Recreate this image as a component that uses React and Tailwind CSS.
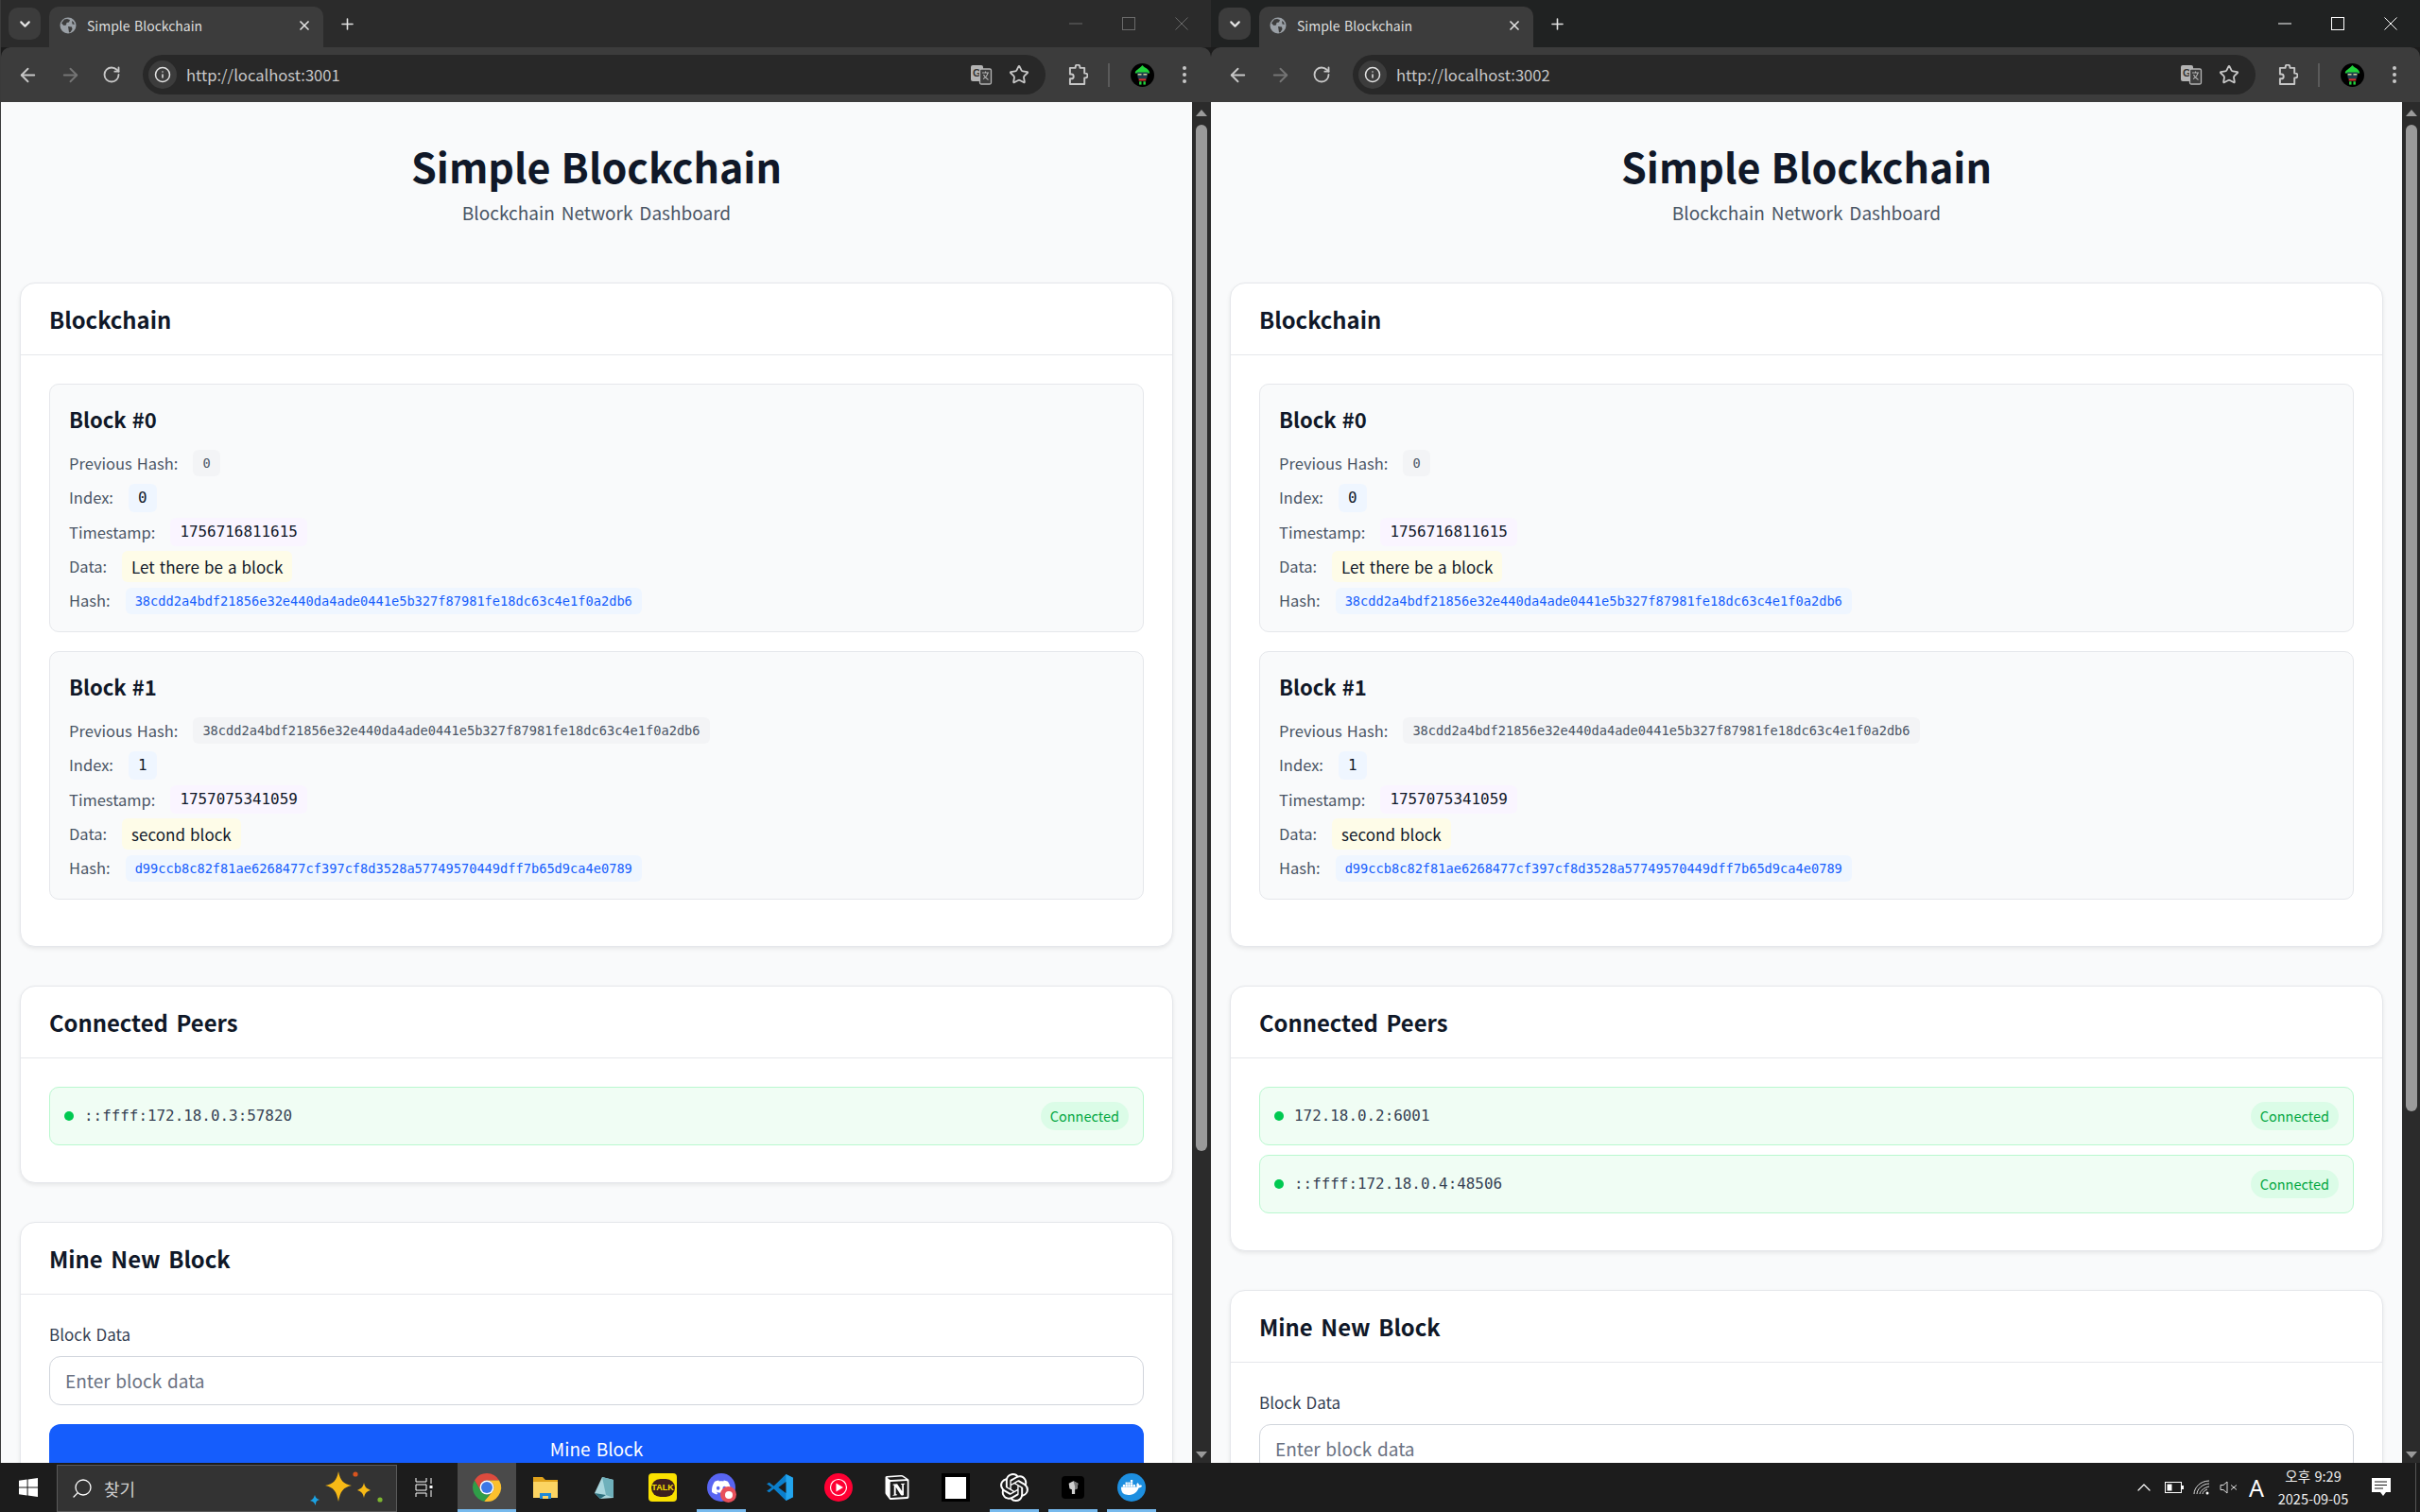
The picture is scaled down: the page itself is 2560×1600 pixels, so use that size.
import { ArrowLeft, ArrowRight, ChevronDown, Info, Plus, RotateCw, Star, X, Search, ChevronUp } from "lucide-react";
import { SiOpenai, SiNotion, SiDocker, SiDiscord } from "react-icons/si";

const UI_FONT = "font-['Noto_Sans_CJK_KR','Noto_Sans',sans-serif] [word-spacing:0.08em]";
const MONO = "font-['DejaVu_Sans_Mono',monospace] [word-spacing:0]";

const HASH_0 = "38cdd2a4bdf21856e32e440da4ade0441e5b327f87981fe18dc63c4e1f0a2db6";
const HASH_1 = "d99ccb8c82f81ae6268477cf397cf8d3528a57749570449dff7b65d9ca4e0789";

const blocks = [
  { id: 0, prev: "0", ts: "1756716811615", data: "Let there be a block", hash: HASH_0 },
  { id: 1, prev: HASH_0, ts: "1757075341059", data: "second block", hash: HASH_1 },
];

const Globe = () => (
  <svg viewBox="0 0 18 18" className="w-[18px] h-[18px] shrink-0">
    <circle cx="9" cy="9" r="8.5" fill="#9aa0a6" />
    <path d="M5 2.5 8 2l3 1-1 2.5L7.5 6 7 8.5 4.5 9 2 6.5zM9 10l4 .5.5 2.5-2 3-1.5.5-.5-3.5zM13 4l2 1.5.8 2.5-2.3-.5z" fill="#3c3c3c" />
  </svg>
);

const Translate = () => (
  <svg viewBox="0 0 24 24" className="w-[24px] h-[24px]">
    <rect x="1" y="2" width="13" height="17" rx="2" fill="#b4b4b4" />
    <text x="3" y="14" fontSize="11" fontWeight="700" fill="#333" fontFamily="Liberation Sans">G</text>
    <rect x="10.5" y="6" width="12" height="16" rx="1.5" fill="#3c3c3c" stroke="#b4b4b4" strokeWidth="1.3" />
    <path d="M13 10h7M16.5 8.5V10M19 10c-.6 3-2.4 5-5 6.5M14.5 12c.8 2 2.8 4 5 5.5" stroke="#b4b4b4" strokeWidth="1.1" fill="none" />
  </svg>
);

const ChromePuzzle = () => (
  <svg viewBox="0 0 22 24" className="ml-[24px] w-[21px] h-[23px]" fill="none" stroke="#c7c7c7" strokeWidth="2" strokeLinejoin="round">
    <path d="M2 4h6V3a2.5 2.5 0 0 1 5 0v1h5v6h1a2.5 2.5 0 0 1 0 5h-1v7H2v-6h1.5a2.5 2.5 0 0 0 0-5H2z" />
  </svg>
);

const Avatar = () => (
  <svg viewBox="0 0 26 26" className="w-[25px] h-[25px]">
    <circle cx="13" cy="13" r="13" fill="#000" />
    <path d="M5 11c0-4 4-4 8-9 2 3 8 4 8 9z" fill="#22d33c" />
    <path d="M7 10h12l-1 6-2.5 3h-5L8 16z" fill="#1f3b4d" />
    <rect x="8" y="11.5" width="4" height="1.5" fill="#d8d69a" />
    <rect x="14" y="11.5" width="4" height="1.5" fill="#d8d69a" />
    <rect x="9" y="17" width="8" height="2.2" fill="#d9302c" />
    <rect x="9.5" y="20" width="2.5" height="3.5" fill="#22d33c" />
    <rect x="14" y="20" width="2.5" height="3.5" fill="#22d33c" />
  </svg>
);

const Kebab = () => (
  <svg viewBox="0 0 6 20" className="w-[6px] h-[20px]" fill="#c7c7c7">
    <circle cx="3" cy="3" r="2" />
    <circle cx="3" cy="10" r="2" />
    <circle cx="3" cy="17" r="2" />
  </svg>
);

const WindowControls = ({ active }) => {
  const stroke = active ? "#ffffff" : "#6a6a6a";
  return (
    <div className="ml-auto flex items-center h-[50px] pr-[24px] gap-[42px]">
      <svg width="14" height="14" viewBox="0 0 14 14"><path d="M0 7h14" stroke={stroke} /></svg>
      <svg width="14" height="14" viewBox="0 0 14 14"><rect x=".5" y=".5" width="13" height="13" fill="none" stroke={stroke} /></svg>
      <svg width="14" height="14" viewBox="0 0 14 14"><path d="M.5.5l13 13M13.5.5l-13 13" stroke={stroke} /></svg>
    </div>
  );
};

const ChromeBar = ({ port, active }) => (
  <div className={`shrink-0 ${UI_FONT}`}>
    <div className={`flex h-[50px] ${active ? "bg-[#202222]" : "bg-[#2b2b2b]"}`}>
      <div className="ml-[8px] mt-[8px] w-[34px] h-[34px] rounded-[10px] bg-[#3c3c3c] flex items-center justify-center">
        <ChevronDown size={17} strokeWidth={3} className="text-[#e3e3e3]" />
      </div>
      <div className="ml-[9px] mt-[7px] w-[290px] h-[43px] rounded-t-[10px] bg-[#3c3c3c] flex items-center pl-[11px] pr-[12px] pb-[4px]">
        <Globe />
        <span className="ml-[11px] mt-[2px] text-[14px] text-[#dedede]">Simple Blockchain</span>
        <X size={16} strokeWidth={2.5} className="ml-auto text-[#e3e3e3]" />
      </div>
      <div className="ml-[16px] h-[50px] flex items-center">
        <Plus size={19} strokeWidth={2} className="text-[#e3e3e3]" />
      </div>
      <WindowControls active={active} />
    </div>
    <div className="h-[58px] bg-[#3c3c3c] flex items-center rounded-t-[10px]">
      <div className="ml-[17px] flex items-center gap-[22px]">
        <ArrowLeft size={23} strokeWidth={2} className="text-[#c7c7c7]" />
        <ArrowRight size={23} strokeWidth={2} className="text-[#757575]" />
        <RotateCw size={20} strokeWidth={2.2} className="text-[#c7c7c7]" />
      </div>
      <div className="ml-[23px] w-[955px] h-[42px] rounded-full bg-[#282828] flex items-center pl-[6px] pr-[17px]">
        <div className="w-[30px] h-[30px] rounded-full bg-[#3c3c3c] flex items-center justify-center">
          <Info size={18} strokeWidth={2} className="text-[#e3e3e3]" />
        </div>
        <span className="ml-[10px] text-[16.6px] text-[#c7c7c7]">http://localhost:{port}</span>
        <div className="ml-auto flex items-center gap-[17px]">
          <Translate />
          <Star size={22} strokeWidth={2} className="text-[#c7c7c7]" />
        </div>
      </div>
      <ChromePuzzle />
      <div className="ml-[21px] w-[2px] h-[25px] bg-[#5a5a5a]" />
      <div className="ml-[22px]"><Avatar /></div>
      <div className="ml-[29px]"><Kebab /></div>
    </div>
  </div>
);

const Scrollbar = ({ thumbH, wide }) => (
  <div className={`shrink-0 bg-[#2b2b2b] flex flex-col items-center pt-[8px] pb-[5px] ${wide ? "w-[20px]" : "w-[19px]"}`}>
    <div className="w-0 h-0 border-x-[6.5px] border-x-transparent border-b-[7px] border-b-[#9a9a9a]" />
    <div className="mt-[9px] w-[12px] bg-[#9a9a9a] rounded-full" style={{ height: thumbH }} />
    <div className="mt-auto w-0 h-0 border-x-[6.5px] border-x-transparent border-t-[7px] border-t-[#9a9a9a]" />
  </div>
);

const Chip = ({ className, children }) => (
  <span className={`px-[10px] rounded-[6px] ${MONO} ${className}`}>{children}</span>
);

const Row = ({ label, children }) => (
  <div className="h-[36.4px] flex items-center gap-[16px]">
    <span className="text-[16.5px] text-[#4a5565]">{label}</span>
    {children}
  </div>
);

const BlockCard = ({ block }) => (
  <div className="bg-gray-50 border border-gray-200 rounded-[10px] px-[20px] pt-[20px] pb-[14px]">
    <h3 className="text-[22px] leading-[33px] h-[45px] font-semibold text-gray-900">Block #{block.id}</h3>
    <Row label="Previous Hash:">
      <Chip className="bg-gray-100 text-gray-600 text-[13.67px] leading-[28px]">{block.prev}</Chip>
    </Row>
    <Row label="Index:">
      <Chip className="bg-blue-50 text-gray-900 text-[15.9px] leading-[30px]">{block.id}</Chip>
    </Row>
    <Row label="Timestamp:">
      <Chip className="bg-purple-50 text-gray-900 text-[15.9px] leading-[30px]">{block.ts}</Chip>
    </Row>
    <Row label="Data:">
      <span className="px-[10px] rounded-[6px] bg-yellow-50 text-gray-900 text-[17px] leading-[33px]">{block.data}</span>
    </Row>
    <Row label="Hash:">
      <Chip className="bg-blue-50 text-blue-600 text-[13.67px] leading-[28px]">{block.hash}</Chip>
    </Row>
  </div>
);

const Card = ({ title, bodyClass, children }) => (
  <section className="bg-white border border-gray-200 rounded-[16px] shadow-[0_2px_4px_rgba(0,0,0,0.08)]">
    <div className="h-[76px] border-b border-gray-200 px-[30px] flex items-center">
      <h2 className="text-[23.8px] font-semibold text-gray-900 [word-spacing:0.14em]">{title}</h2>
    </div>
    <div className={`px-[30px] pt-[30px] ${bodyClass}`}>{children}</div>
  </section>
);

const PeerItem = ({ addr }) => (
  <div className="h-[62px] bg-green-50 border border-green-200 rounded-[10px] pl-[15px] pr-[15px] flex items-center">
    <span className="w-[10px] h-[10px] rounded-full bg-green-500" />
    <span className={`ml-[11px] text-[15.9px] text-gray-700 ${MONO}`}>{addr}</span>
    <span className="ml-auto h-[30px] px-[10px] rounded-full bg-green-100 text-green-600 text-[14.5px] flex items-center">Connected</span>
  </div>
);

const Dashboard = ({ peers }) => (
  <div className={`flex-1 min-w-0 overflow-hidden bg-gray-50 px-[20px] ${UI_FONT}`}>
    <header className="h-[191px] pt-[39px] text-center">
      <h1 className="text-[43px] leading-[56px] font-bold text-gray-900">Simple Blockchain</h1>
      <p className="mt-[8px] text-[19px] leading-[28px] text-gray-600 [word-spacing:0.14em]">Blockchain Network Dashboard</p>
    </header>
    <div className="flex flex-col gap-[41px]">
      <Card title="Blockchain" bodyClass="pb-[49px]">
        <div className="flex flex-col gap-[20px]">
          {blocks.map((b) => <BlockCard key={b.id} block={b} />)}
        </div>
      </Card>
      <Card title="Connected Peers" bodyClass="pb-[39px]">
        <div className="flex flex-col gap-[10px]">
          {peers.map((p) => <PeerItem key={p} addr={p} />)}
        </div>
      </Card>
      <Card title="Mine New Block" bodyClass="pb-[30px]">
        <label className="block text-[17px] leading-[28px] text-gray-700 -mt-[2px] mb-[9px]">Block Data</label>
        <input
          placeholder="Enter block data"
          className="block w-full h-[52px] border border-gray-300 rounded-[12px] px-[16px] text-[19px] [word-spacing:0.08em] placeholder:text-gray-500 outline-none"
        />
        <button className="mt-[20px] w-full h-[52px] rounded-[12px] bg-blue-600 text-white text-[19px] [word-spacing:0.1em]">Mine Block</button>
      </Card>
    </div>
  </div>
);

const BrowserWindow = ({ port, peers, active, thumbH, className }) => (
  <div className={`flex flex-col min-h-0 ${className}`}>
    <ChromeBar port={port} active={active} />
    <div className="flex-1 min-h-0 flex">
      <Dashboard peers={peers} />
      <Scrollbar thumbH={thumbH} wide={!active} />
    </div>
  </div>
);

// taskbar glyphs
const WinLogo = () => (
  <svg viewBox="0 0 20 20" className="w-[20px] h-[20px]" fill="#fff">
    <path d="M0 2.8 8.6 1.6v7.9H0zM9.6 1.4 20 0v9.5H9.6zM0 10.5h8.6v7.9L0 17.2zM9.6 10.5H20V20L9.6 18.6z" />
  </svg>
);

const Sparkles = () => (
  <svg viewBox="0 0 78 40" className="w-[78px] h-[40px]">
    <path d="M30 2c2 10 5 13 14 15-9 2-12 6-14 17-2-11-5-15-14-17 9-2 12-5 14-15z" fill="#f7b916" />
    <path d="M57 14c1 5 3 6 7 8-4 1-6 3-7 8-1-5-3-7-7-8 4-2 6-3 7-8z" fill="#f7b916" />
    <path d="M5 27c1 3 2 4 5 5-3 1-4 2-4 6-2-3-2-4-6-5 3-1 4-3 5-6z" fill="#1ba1e2" />
    <circle cx="48" cy="5" r="2.6" fill="#d9541e" />
    <circle cx="74" cy="32" r="2.6" fill="#7db52f" />
  </svg>
);

const ChromeIcon = () => (
  <svg viewBox="0 0 24 24" className="w-[36px] h-[36px]">
    <path d="M12 2a10 10 0 0 1 8.66 5H12a5 5 0 0 0-4.33 7.5L3.34 7A10 10 0 0 1 12 2z" fill="#dd4b3e" />
    <path d="M3.34 7l4.33 7.5a5 5 0 0 0 6.83 1.83L10.17 21.83A10 10 0 0 1 3.34 7z" fill="#2f9e48" />
    <path d="M20.66 7H12a5 5 0 0 1 4.33 7.5l-6.16 7.33A10 10 0 0 0 20.66 7z" fill="#fbc02d" />
    <circle cx="12" cy="12" r="5" fill="#fff" />
    <circle cx="12" cy="12" r="4" fill="#3b78e7" />
  </svg>
);

const FolderIcon = () => (
  <svg viewBox="0 0 28 28" className="w-[28px] h-[28px]">
    <path d="M1 3h10l3 3h13v19H1z" fill="#e0a21b" />
    <path d="M1 8h26v17H1z" fill="#fcd462" />
    <path d="M8 20h12v6H8z" fill="#1e88d6" />
    <path d="M11 23h6v3h-6z" fill="#fcd462" />
  </svg>
);

const CrystalIcon = () => (
  <svg viewBox="0 0 28 28" className="w-[28px] h-[28px]">
    <path d="M4 20 12 3l12 3v19l-14 1z" fill="#a9d6dd" />
    <path d="M12 3l12 3v19l-8-3z" fill="#6fb0bb" />
    <path d="M4 20l6 6 6-4z" fill="#2d6f7d" />
  </svg>
);

const KakaoIcon = () => (
  <div className="w-[30px] h-[30px] rounded-[4px] bg-[#fae100] flex items-center justify-center">
    <div className="w-[25px] h-[19px] rounded-full bg-[#3c1e1e] flex items-center justify-center text-[9px] font-bold leading-none text-[#fae100] font-['Liberation_Sans',sans-serif]">TALK</div>
  </div>
);

const DiscordIcon = () => (
  <div className="relative w-[30px] h-[30px] rounded-full bg-[#5865f2] flex items-center justify-center">
    <SiDiscord size={20} className="text-white" />
    <div className="absolute -right-[1px] -bottom-[1px] w-[17px] h-[17px] rounded-full bg-[#e8505b] flex items-center justify-center">
      <div className="w-[8px] h-[8px] rounded-full bg-white" />
    </div>
  </div>
);

const VscodeIcon = () => (
  <svg viewBox="0 0 28 28" className="w-[30px] h-[30px]">
    <path d="M20 1 27 4.5v19L20 27 8 15.5l-4.5 3.5L1 17.5 6 14 1 10.5 3.5 9 8 12.5z" fill="#0b7fcc" />
    <path d="M20 1 27 4.5v19L20 27z" fill="#23a5ee" />
    <path d="M20 8.5v11L12.5 14z" fill="#1c1c1c" />
  </svg>
);

const YtMusicIcon = () => (
  <svg viewBox="0 0 30 30" className="w-[30px] h-[30px]">
    <circle cx="15" cy="15" r="15" fill="#ff0033" />
    <circle cx="15" cy="15" r="8.5" fill="none" stroke="#fff" strokeWidth="1.2" />
    <path d="M12.5 10.5 20 15l-7.5 4.5z" fill="#fff" />
  </svg>
);

const BlackSquare = () => (
  <div className="w-[30px] h-[30px] bg-black flex items-center justify-center">
    <div className="w-[22px] h-[23px] bg-white" />
  </div>
);

const CubeIcon = () => (
  <div className="w-[24px] h-[24px] rounded-[4px] bg-black flex items-center justify-center">
    <svg viewBox="0 0 16 20" className="w-[13px] h-[17px]">
      <path d="M2 4 8 1l6 3-1 7-3 1v6H6v-6l-3-1z" fill="#cfcfcf" />
      <path d="M8 1l6 3-1 7-3 1V8z" fill="#777" />
    </svg>
  </div>
);

const DockerIcon = () => (
  <div className="w-[30px] h-[30px] rounded-full bg-[#1d8fe0] flex items-center justify-center">
    <SiDocker size={22} className="text-white" />
  </div>
);

const apps = [
  { key: "chrome", icon: <ChromeIcon />, selected: true, running: true },
  { key: "files", icon: <FolderIcon /> },
  { key: "crystal", icon: <CrystalIcon /> },
  { key: "kakao", icon: <KakaoIcon /> },
  { key: "discord", icon: <DiscordIcon />, running: true },
  { key: "vscode", icon: <VscodeIcon /> },
  { key: "ytmusic", icon: <YtMusicIcon /> },
  { key: "notion", icon: <SiNotion size={26} className="text-white" /> },
  { key: "square", icon: <BlackSquare /> },
  { key: "chatgpt", icon: <SiOpenai size={30} className="text-white" />, running: true },
  { key: "cube", icon: <CubeIcon />, running: true },
  { key: "docker", icon: <DockerIcon />, running: true },
];

const TaskApp = ({ icon, selected, running }) => (
  <div className={`relative w-[62px] h-full flex items-center justify-center ${selected ? "bg-[#4a4a4a]" : ""}`}>
    {icon}
    {running && <div className="absolute bottom-0 left-[5px] right-[5px] h-[3px] bg-[#76b9ed]" />}
    {selected && <div className="absolute bottom-0 left-0 right-0 h-[3px] bg-[#76b9ed]" />}
  </div>
);

const Tray = () => (
  <div className="ml-auto flex items-center h-full text-white">
    <ChevronUp size={24} strokeWidth={1.2} />
    <svg width="20" height="12" viewBox="0 0 20 12" className="ml-[10px]">
      <rect x=".5" y=".5" width="17" height="11" fill="none" stroke="#fff" />
      <rect x="2.5" y="2.5" width="5" height="7" fill="#fff" />
      <rect x="18" y="4" width="2" height="4" fill="#fff" />
    </svg>
    <svg width="18" height="16" viewBox="0 0 18 16" className="ml-[10px]" fill="none" stroke="#ddd">
      <path d="M1 15C1 8 8 1 17 1M4 15C4 10 10 4 17 4M7 15c0-3 5-7 10-8M10 15c0-2 2-4 5-5" />
      <circle cx="15" cy="14" r="1.5" fill="#fff" stroke="none" />
    </svg>
    <svg width="20" height="14" viewBox="0 0 20 14" className="ml-[10px]" fill="none" stroke="#ddd">
      <path d="M1 4.5h3L8 1v12L4 9.5H1zM12 4.5l6 5M18 4.5l-6 5" />
    </svg>
    <span className="ml-[9px] w-[20px] text-center text-[25px] leading-none font-['Noto_Sans',sans-serif]">A</span>
    <div className="ml-[4px] w-[92px] flex flex-col items-center text-[14.5px] leading-[24px] text-[#eee]">
      <span>오후 9:29</span>
      <span>2025-09-05</span>
    </div>
    <svg width="22" height="20" viewBox="0 0 22 20" className="ml-[15px]">
      <path d="M1 0h20v15h-5l-3 4-3-4H1z" fill="#fff" />
      <path d="M4 4h13M4 7.5h13M4 11h9" stroke="#1c1c1c" />
    </svg>
    <div className="ml-[25px] w-[1px] h-full bg-[#555]" />
    <div className="w-[4px]" />
  </div>
);

const Taskbar = () => (
  <div className={`h-[52px] shrink-0 bg-[#1c1c1c] flex items-stretch ${UI_FONT}`}>
    <div className="w-[60px] flex items-center justify-center"><WinLogo /></div>
    <div className="mt-[2px] w-[360px] bg-[#333333] border border-[#5a5a5a] flex items-center pl-[14px] pr-[13px]">
      <Search size={24} strokeWidth={1.3} className="text-white -scale-x-100" />
      <span className="ml-[11px] text-[18px] text-[#d0d0d0]">찾기</span>
      <div className="ml-auto"><Sparkles /></div>
    </div>
    <div className="w-[64px] flex items-center justify-center pr-[6px]">
      <svg width="20" height="22" viewBox="0 0 20 22" fill="none" stroke="#fff">
        <path d="M1 1v4h11V1M1 21v-4h11v4M1 8h11v6H1zM17 1v6M17 14v7" />
        <rect x="15.5" y="9" width="3" height="3" fill="#fff" stroke="none" />
      </svg>
    </div>
    {apps.map((a) => <TaskApp key={a.key} {...a} />)}
    <Tray />
  </div>
);

export default function App() {
  return (
    <div className="w-[2560px] h-[1600px] flex flex-col overflow-hidden bg-[#1c1c1c]">
      <div className="flex-1 min-h-0 flex">
        <BrowserWindow port="3001" peers={["::ffff:172.18.0.3:57820"]} thumbH={1086} className="w-[1281px] border-l border-[#3a3a3a]" />
        <BrowserWindow port="3002" peers={["172.18.0.2:6001", "::ffff:172.18.0.4:48506"]} active thumbH={1044} className="flex-1 min-w-0" />
      </div>
      <Taskbar />
    </div>
  );
}
